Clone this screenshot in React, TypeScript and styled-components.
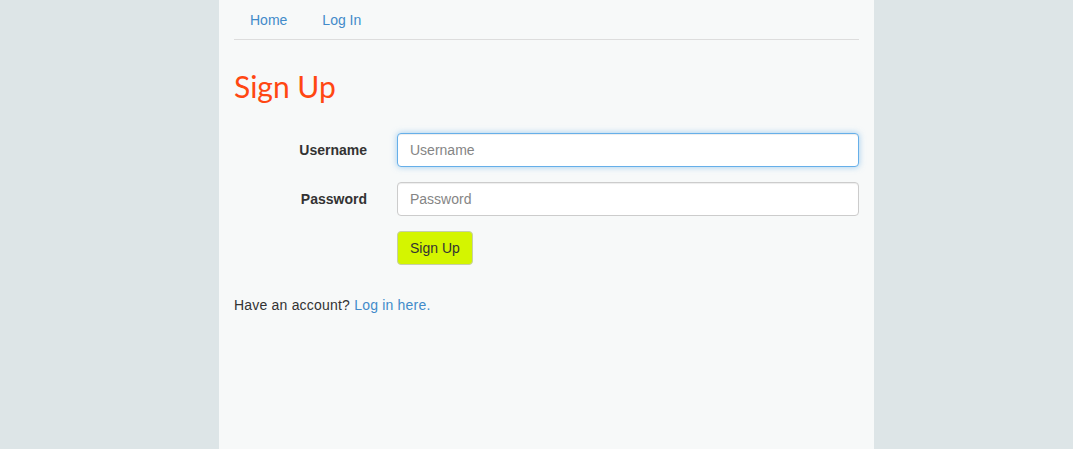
import React from "react";
import styled, { createGlobalStyle, css } from "styled-components";

const Global = createGlobalStyle`
  html, body { margin: 0; padding: 0; background: #dde5e7; }
  body {
    font-family: "Liberation Sans", Arial, Helvetica, sans-serif;
    font-size: 14px;
    line-height: 20px;
    color: #333;
  }
  * { box-sizing: border-box; }
`;

const Page = styled.div`
  width: 655px;
  min-height: 449px;
  margin: 0 0 0 219px;
  padding: 0 15px;
  background: #f7f9f9;
`;

const Nav = styled.ul`
  display: flex;
  list-style: none;
  margin: 0;
  padding: 0;
  gap: 3px;
  border-bottom: 1px solid #dddddd;
`;

const NavLink = styled.a`
  display: block;
  padding: 10px 16px 10px 16px;
  margin-bottom: -1px;
  color: #428bca;
  text-decoration: none;
`;

const Title = styled.h2`
  font-family: Lato, "Liberation Sans", sans-serif;
  font-weight: 400;
  font-size: 30px;
  line-height: 33px;
  color: #ff4712;
  margin: 30px 0 30px;
`;

const Form = styled.form`
  display: grid;
  grid-template-columns: 133px 1fr;
  column-gap: 30px;
  row-gap: 15px;
`;

const Label = styled.label`
  text-align: right;
  font-weight: 700;
  padding-top: 7px;
  line-height: 20px;
`;

const Input = styled.input<{ $focused?: boolean }>`
  display: block;
  width: 100%;
  height: 34px;
  padding: 6px 12px;
  font-family: "Liberation Sans", Arial, sans-serif;
  font-size: 14px;
  line-height: 20px;
  color: #555;
  background: #fff;
  border: 1px solid #ccc;
  border-radius: 4px;
  box-shadow: inset 0 1px 1px rgba(0, 0, 0, 0.075);
  outline: none;
  &::placeholder { color: #858585; }
  ${(p) =>
    p.$focused &&
    css`
      border-color: #66afe9;
      box-shadow: inset 0 1px 1px rgba(0, 0, 0, 0.075), 0 0 6px rgba(102, 175, 233, 0.6);
    `}
  &:focus {
    border-color: #66afe9;
    box-shadow: inset 0 1px 1px rgba(0, 0, 0, 0.075), 0 0 6px rgba(102, 175, 233, 0.6);
  }
`;

const Button = styled.button`
  justify-self: start;
  height: 34px;
  padding: 6px 12px;
  font-family: "Liberation Sans", Arial, sans-serif;
  font-size: 14px;
  line-height: 20px;
  color: #333;
  background: #d4f500;
  border: 1px solid #c6cfa8;
  border-radius: 4px;
  cursor: pointer;
`;

const Footer = styled.p`
  margin: 30px 0 0;
  letter-spacing: 0.2px;
`;

const Link = styled.a`
  color: #428bca;
  text-decoration: none;
`;

export default function App() {
  return (
    <>
      <Global />
      <Page>
        <Nav>
          <li><NavLink href="#">Home</NavLink></li>
          <li><NavLink href="#">Log In</NavLink></li>
        </Nav>
        <Title>Sign Up</Title>
        <Form onSubmit={(e) => e.preventDefault()}>
          <Label htmlFor="username">Username</Label>
          <Input id="username" placeholder="Username" $focused autoFocus />
          <Label htmlFor="password">Password</Label>
          <Input id="password" type="password" placeholder="Password" />
          <span />
          <Button type="submit">Sign Up</Button>
        </Form>
        <Footer>
          Have an account? <Link href="#">Log in here.</Link>
        </Footer>
      </Page>
    </>
  );
}
